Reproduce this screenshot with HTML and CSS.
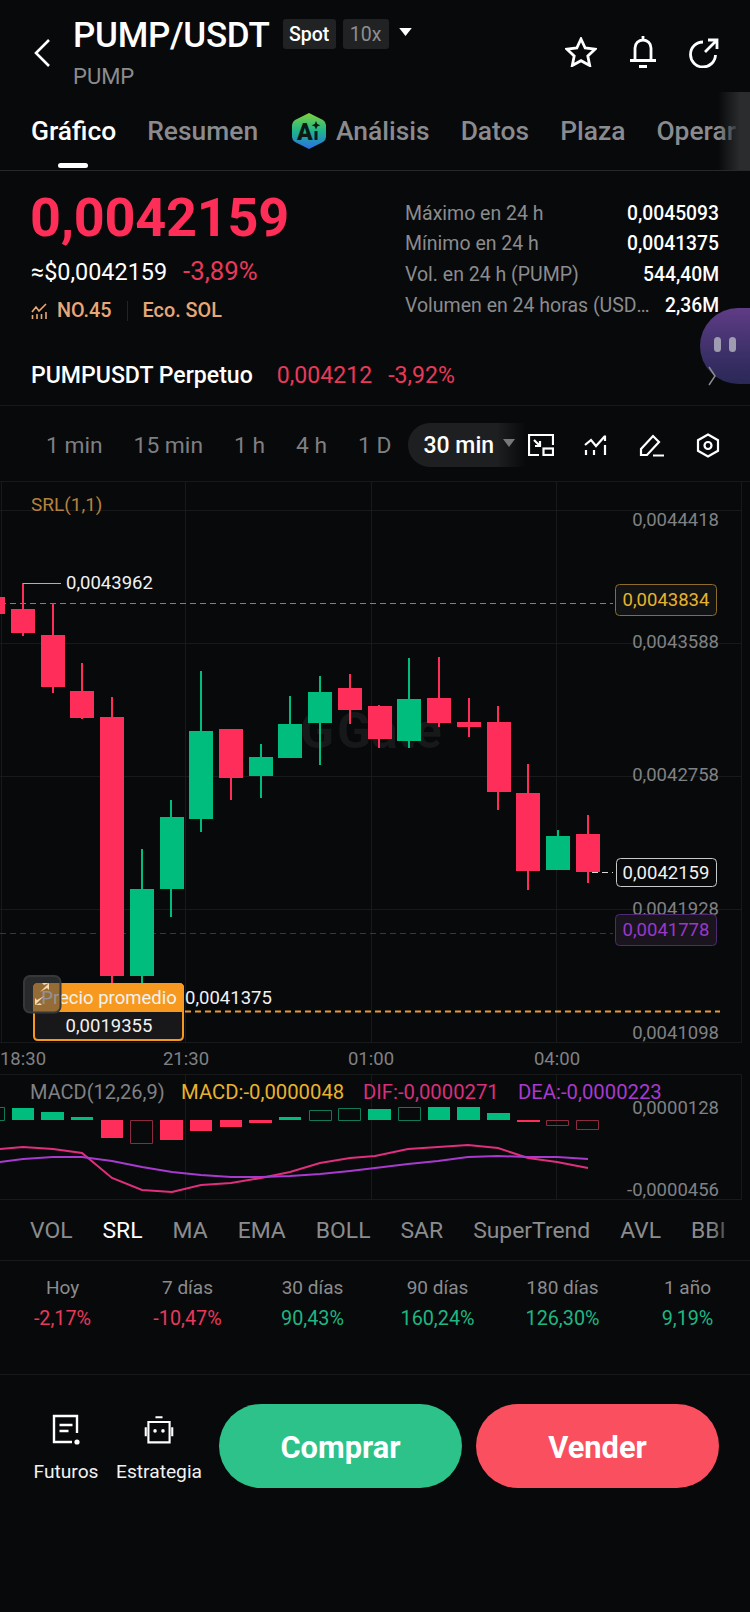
FILE: index.html
```html
<!DOCTYPE html>
<html lang="es">
<head>
<meta charset="utf-8">
<title>PUMP/USDT</title>
<link rel="stylesheet" href="styles.css">
</head>
<body>
<div class="page">
  <header class="header">
    <svg class="back" viewBox="0 0 18 30"><path d="M16 2 3 15l13 13"/></svg>
    <div class="title-block">
      <div class="title-line">
        <span class="title">PUMP/USDT</span>
        <span class="tag tag-on">Spot</span>
        <span class="tag">10x</span>
        <svg class="caret" viewBox="0 0 14 10"><path d="M0 0h14L7 9z"/></svg>
      </div>
      <div class="subtitle">PUMP</div>
    </div>
    <div class="head-icons">
      <svg class="hi star" viewBox="0 0 32 30"><path d="M16 2l4.2 9 9.8 1.2-7.2 6.7 1.9 9.6L16 23.700l-8.700 4.800 1.900-9.600L2 12.200 11.800 11z"/></svg>
      <svg class="hi bell" viewBox="0 0 28 33"><path d="M14 1v3M6 25V13a8 8 0 0 1 16 0v12M1 25.500h26M10 31.500h8"/></svg>
      <svg class="hi share" viewBox="0 0 30 30"><path d="M14 4A12.500 12.500 0 1 0 26.500 17M19 2h9v9M28 2 16 14"/></svg>
    </div>
  </header>

  <nav class="tabs">
    <span class="tab tab-on">Gráfico</span>
    <span class="tab">Resumen</span>
    <span class="tab tab-ai">
      <svg class="ai" viewBox="0 0 34 36">
        <defs><linearGradient id="aig" x1="0" y1="0" x2="0" y2="1"><stop offset="0" stop-color="#7ed23c"/><stop offset=".5" stop-color="#1fb58c"/><stop offset="1" stop-color="#2a6fe8"/></linearGradient></defs>
        <path fill="url(#aig)" d="M17 0 31 7q3 2 3 5v12q0 3-3 5L17 36 3 29q-3-2-3-5V12q0-3 3-5z"/>
        <text class="ai-a" x="5" y="27">A</text>
        <path fill="#0d1a14" d="M24 8l1.300 3 3 1.200-3 1.300L24 16.500l-1.300-3-3-1.300 3-1.200zM22.500 18h3v9h-3z"/>
      </svg>
      Análisis
    </span>
    <span class="tab">Datos</span>
    <span class="tab">Plaza</span>
    <span class="tab">Operar</span>
    <span class="tabs-fade"></span>
  </nav>

  <section class="summary">
    <div class="sum-left">
      <div class="price">0,0042159</div>
      <div class="sub-price"><span>≈$0,0042159</span><span class="down sub-pct">-3,89%</span></div>
      <div class="tags">
        <svg class="rank" viewBox="0 0 17 17"><path d="M1 9l4-5 3 4 7-7M1.500 12v4M6 11v5M10.500 11v5M15 9v7"/></svg>
        <span>NO.45</span><i class="sep"></i><span>Eco. SOL</span>
      </div>
    </div>
    <dl class="stats">
      <div class="stat"><dt>Máximo en 24 h</dt><dd>0,0045093</dd></div>
      <div class="stat"><dt>Mínimo en 24 h</dt><dd>0,0041375</dd></div>
      <div class="stat"><dt>Vol. en 24 h (PUMP)</dt><dd>544,40M</dd></div>
      <div class="stat"><dt class="clip">Volumen en 24 horas (USDT)</dt><dd>2,36M</dd></div>
    </dl>
  </section>

  <section class="perp">
    <span class="perp-name">PUMPUSDT Perpetuo</span>
    <span class="down perp-price">0,004212</span>
    <span class="down perp-pct">-3,92%</span>
    <svg class="perp-chev" viewBox="0 0 8 20"><path d="M1 1l6 9-6 9"/></svg>
  </section>

  <section class="frames">
    <span class="frame f1">1 min</span>
    <span class="frame f2">15 min</span>
    <span class="frame f3">1 h</span>
    <span class="frame f4">4 h</span>
    <span class="frame f5">1 D</span>
    <span class="frame-on">30 min<svg class="frame-caret" viewBox="0 0 12 8"><path d="M0 0h12L6 8z"/></svg></span>
    <span class="tools">
      <svg class="tool t-a" viewBox="0 0 26 22"><path d="M11 21H1V1h24v10M6 6l6 6M12 7v5H7"/><rect x="15.500" y="14.500" width="9.500" height="6.500"/></svg>
      <svg class="tool t-b" viewBox="0 0 24 22"><path d="M1 11l6-5 5 6 9-10M21 1.500V7M2 16v5M10 16v5M21 11v10"/></svg>
      <svg class="tool t-c" viewBox="0 0 26 23"><path d="M2 15 14 2l6 6L8 21H2zM14 21.500h11"/></svg>
      <svg class="tool t-d" viewBox="0 0 24 25"><path d="M12 1.500l10 5.700v10.600l-10 5.700-10-5.700V7.200z"/><circle cx="12" cy="12.500" r="3.500"/></svg>
    </span>
  </section>

  <svg class="chart" viewBox="0 482 750 718">
    <path class="grid" d="M0 510.500H742M0 643.500H742M0 776.500H742M0 909.500H742M0 1042.500H742M0 1074.500H742M0 1199.500H742M1.500 482V1042M185.500 482V1042M371.500 482V1042M556.500 482V1042M741.500 482V1042M185.500 1074V1200M371.500 1074V1200M556.500 1074V1200M741.500 1074V1200"/>

    <text class="wm" x="300" y="748">G</text>
    <text class="wm" x="337" y="748">Gate</text>

    <path class="dash-o" d="M0 603.500H613"/>
    <path class="dash-p" d="M0 933.500H613"/>
    <path class="dash-w" d="M592 872.500H613"/>
    <path class="dash-a" d="M185 1011.500H720"/>

    <path class="dn" d="M-19 597h24v17h-24zM11 609h24v24h-24zM22 583h2v53h-2zM41 635h24v52h-24zM52 603h2v90h-2zM70 691h24v27h-24zM81 663h2v56h-2zM100 717h24v259h-24zM111 697h2v288h-2zM219 729h24v49h-24zM230 729h2v71h-2zM338 688h24v22h-24zM349 674h2v50h-2zM368 706h24v33h-24zM378 705h2v43h-2zM427 698h24v25h-24zM438 657h2v70h-2zM457 722h24v5h-24zM468 698h2v39h-2zM487 722h24v70h-24zM497 706h2v104h-2zM516 793h24v78h-24zM527 764h2v126h-2zM576 834h24v38h-24zM587 815h2v68h-2z"/>
    <path class="up" d="M130 889h24v87h-24zM141 849h2v136h-2zM160 817h24v72h-24zM170 800h2v117h-2zM189 731h24v88h-24zM200 671h2v161h-2zM249 757h24v19h-24zM260 744h2v54h-2zM278 724h24v34h-24zM289 696h2v62h-2zM308 692h24v31h-24zM319 676h2v89h-2zM397 699h24v42h-24zM408 658h2v90h-2zM546 836h24v34h-24zM557 830h2v40h-2z"/>

    <path class="leader" d="M23 583.500H61"/>
    <text class="lbl-srl" x="31" y="511">SRL(1,1)</text>
    <text class="lbl-w" x="66" y="589">0,0043962</text>
    <text class="lbl-w" x="185" y="1004">0,0041375</text>

    <text class="axis end" x="719" y="526">0,0044418</text>
    <text class="axis end" x="719" y="648">0,0043588</text>
    <text class="axis end" x="719" y="781">0,0042758</text>
    <text class="axis end" x="719" y="915">0,0041928</text>
    <text class="axis end" x="719" y="1039">0,0041098</text>

    <rect class="box-y" x="615.500" y="584.500" width="101" height="31" rx="4"/>
    <text class="txt-y mid" x="666" y="606">0,0043834</text>
    <rect class="box-w" x="616.500" y="858.500" width="100" height="28" rx="4"/>
    <text class="lbl-w mid" x="666" y="879">0,0042159</text>
    <rect class="box-p" x="615.500" y="914.500" width="101" height="31" rx="4"/>
    <text class="txt-p mid" x="666" y="936">0,0041778</text>

    <path class="avg-body" d="M38 984h141q4 0 4 4v48q0 4-4 4H38q-4 0-4-4v-48q0-4 4-4z"/>
    <path class="avg-head" d="M38 983h141q5 0 5 5v24H33v-24q0-5 5-5z"/>
    <text class="lbl-w mid" x="109" y="1004">Precio promedio</text>
    <text class="lbl-w mid" x="109" y="1032">0,0019355</text>
    <rect class="expand" x="24" y="976" width="36.500" height="36.500" rx="6"/>
    <path class="expand-a" d="M40 992l9-9h-7l2 2 5-2v7l-2-2zM44 996l-9 9h7l-2-2-5 2v-7l2 2z"/>

    <text class="axis mid" x="23" y="1065">18:30</text>
    <text class="axis mid" x="186" y="1065">21:30</text>
    <text class="axis mid" x="371" y="1065">01:00</text>
    <text class="axis mid" x="557" y="1065">04:00</text>

    <text class="macd-t" x="30" y="1099">MACD(12,26,9)</text>
    <text class="txt-y macd-h" x="181" y="1099">MACD:-0,0000048</text>
    <text class="txt-d macd-h" x="363" y="1099">DIF:-0,0000271</text>
    <text class="txt-e macd-h" x="518" y="1099">DEA:-0,0000223</text>
    <text class="axis end" x="719" y="1114">0,0000128</text>
    <text class="axis end" x="719" y="1196">-0,0000456</text>

    <path class="up" d="M12 1108h22v12H12zM41 1112h23v8H41zM71 1117h22v3H71zM279 1117h22v3h-22zM368 1109h23v11h-23zM428 1107h22v13h-22zM457 1107h23v13h-23zM487 1113h23v7h-23z"/>
    <path class="dn" d="M101 1120h22v18h-22zM160 1120h23v20h-23zM190 1120h22v11h-22zM220 1120h22v7h-22zM249 1120h23v3h-23zM517 1120h23v2h-23z"/>
    <path class="hollow-u" d="M-18 1107.500H4.500V1120.500H-18zM309.500 1110.500h22v10h-22zM338.500 1108.500h22v12h-22zM398.500 1107.500h22v13h-22z"/>
    <path class="hollow-d" d="M130.500 1120.500h22v23h-22zM546.500 1120.500h22v5h-22zM576.500 1120.500h22v9h-22z"/>
    <polyline class="ln-d" points="0,1149 23,1147 53,1149 82,1153 112,1178 142,1190 172,1192 201,1185 231,1183 261,1178 290,1172 320,1163 350,1158 375,1156 408,1149 438,1147 468,1145 498,1148 528,1158 557,1162 588,1168"/>
    <polyline class="ln-e" points="0,1162 23,1159 53,1157 82,1157 112,1161 142,1167 172,1172 201,1175 231,1177 261,1177 290,1176 320,1174 350,1171 375,1168 408,1164 438,1161 468,1157 498,1156 528,1157 557,1157 588,1159"/>
  </svg>

  <nav class="inds">
    <span class="ind">VOL</span>
    <span class="ind ind-on">SRL</span>
    <span class="ind">MA</span>
    <span class="ind">EMA</span>
    <span class="ind">BOLL</span>
    <span class="ind">SAR</span>
    <span class="ind">SuperTrend</span>
    <span class="ind">AVL</span>
    <span class="ind">BBI</span>
    <span class="inds-fade"></span>
  </nav>

  <section class="returns">
    <div class="ret"><span class="ret-k">Hoy</span><span class="ret-d">-2,17%</span></div>
    <div class="ret"><span class="ret-k">7 días</span><span class="ret-d">-10,47%</span></div>
    <div class="ret"><span class="ret-k">30 días</span><span class="ret-u">90,43%</span></div>
    <div class="ret"><span class="ret-k">90 días</span><span class="ret-u">160,24%</span></div>
    <div class="ret"><span class="ret-k">180 días</span><span class="ret-u">126,30%</span></div>
    <div class="ret"><span class="ret-k">1 año</span><span class="ret-u">9,19%</span></div>
  </section>

  <footer class="actions">
    <div class="act act-f">
      <svg class="act-i" viewBox="0 0 30 32"><path d="M26 19V2H3v26h18M8.500 11h13M8.500 17h9"/><circle class="dot" cx="26" cy="28" r="2.600"/></svg>
      <span>Futuros</span>
    </div>
    <div class="act act-s">
      <svg class="act-i" viewBox="0 0 34 32"><path d="M13 1.500h8M5 7h24v23H5zM2 13v10M32 13v10"/><circle class="dot" cx="12.500" cy="17" r="2"/><circle class="dot" cx="21.500" cy="17" r="2"/></svg>
      <span>Estrategia</span>
    </div>
    <div class="btn btn-buy">Comprar</div>
    <div class="btn btn-sell">Vender</div>
  </footer>

  <div class="bubble"><i></i><i></i></div>
</div>
</body>
</html>
```
FILE: styles.css
```css
* { box-sizing: border-box; }
html, body { margin: 0; padding: 0; background: #08090a; }
body { font-family: Roboto, "Liberation Sans", sans-serif; color: #fff; }
.page { position: relative; width: 750px; height: 1612px; overflow: hidden; background: #08090a; }

.header { display: flex; height: 92px; padding: 16px 31px 0 33px; }
.back { width: 18px; height: 30px; margin-top: 22px; margin-right: 22px; fill: none; stroke: #fff; stroke-width: 2.6; }
.title-line { display: flex; align-items: center; height: 40px; }
.title { font-size: 35px; font-weight: 500; line-height: 40px; margin-right: 13px; letter-spacing: -.3px; }
.tag { display: flex; align-items: center; justify-content: center; height: 30px; border-radius: 3px; background: #212224; font-size: 19.500px; color: #8d8e90; margin-top: -4px; margin-right: 7px; }
.tag-on { color: #fff; font-weight: 500; width: 53px; }
.tag:not(.tag-on) { width: 46px; }
.caret { width: 13px; height: 9px; fill: #fff; margin-left: 3px; margin-top: -8px; }
.subtitle { font-size: 22px; line-height: 26px; margin-top: 8px; color: #8b8c8e; }
.head-icons { display: flex; margin-left: auto; align-items: flex-start; padding-top: 19px; }
.hi { fill: none; stroke: #fff; stroke-width: 2.8; }
.star { width: 32px; height: 30px; margin-top: 2px; }
.bell { width: 28px; height: 33px; margin-left: 32px; }
.share { width: 30px; height: 30px; margin-left: 32px; margin-top: 3px; }

.tabs { position: relative; display: flex; align-items: center; height: 79px; padding: 0 0 0 32px; gap: 31px; border-bottom: 1px solid #27282a; font-size: 26.400px; font-weight: 500; color: #8a8b8e; overflow: hidden; white-space: nowrap; }
.tab { position: relative; display: flex; align-items: center; line-height: 30px; margin-top: 0; }
.tab-on { color: #fff; margin-left: -1px; }
.tab-on::after { content: ""; position: absolute; left: 27px; top: 47px; width: 30px; height: 5px; border-radius: 3px; background: #fff; }
.tab-ai { margin-left: 3px; }
.ai { width: 34px; height: 36px; margin-right: 10px; }
.ai-a { font: 900 23px Roboto, sans-serif; fill: #0d1a14; }
.tabs-fade { position: absolute; right: 0; top: 0; bottom: 0; width: 32px; background: linear-gradient(90deg, rgba(40,41,43,0), #2b2c2e 70%); }

.summary { display: flex; justify-content: space-between; height: 169px; padding: 17px 31px 0 30px; }
.price { font-size: 54px; font-weight: 700; line-height: 60px; color: #ff2e58; letter-spacing: -.25px; }
.sub-price { display: flex; align-items: baseline; gap: 16px; font-size: 23.400px; line-height: 28px; margin-top: 9px; padding-left: 1px; }
.sub-pct { font-size: 25.800px; }
.down { color: #e8395a; }
.tags { display: flex; align-items: center; font-size: 19.800px; font-weight: 500; color: #e5a878; line-height: 24px; margin-top: 13px; padding-left: 1px; }
.rank { width: 17px; height: 17px; margin-right: 9px; fill: none; stroke: #e5a878; stroke-width: 1.600; }
.sep { width: 1px; height: 20px; background: #232426; margin: 0 15px; }
.stats { width: 314px; margin: 10px 0 0; }
.stat { display: flex; align-items: center; justify-content: space-between; height: 30.600px; font-size: 19.300px; }
.stat dt { color: #8b8c8e; white-space: nowrap; font-size: 19.500px; }
.stat dd { margin: 0; color: #fff; font-weight: 500; white-space: nowrap; }
.stat .clip { width: 247px; overflow: hidden; text-overflow: ellipsis; }

.perp { display: flex; align-items: center; height: 66px; padding: 6px 34px 0 31px; font-size: 23.100px; border-bottom: 1px solid #17181a; }
.perp-name { font-weight: 500; margin-right: 24px; }
.perp-price { margin-right: 16px; }
.perp-chev { position: relative; z-index: 2; width: 8px; height: 20px; margin-left: auto; fill: none; stroke: #8b8c8e; stroke-width: 1.500; }

.frames { display: flex; align-items: center; height: 76px; padding: 3px 30px 0 46px; font-size: 22.800px; color: #7e7f82; border-bottom: 1px solid #17181a; }
.frame { white-space: nowrap; }
.frame:not(:first-child) { margin-left: 31px; }
.frame-on { display: flex; align-items: center; height: 44px; width: 118px; margin-left: 16px; padding-left: 16px; border-radius: 22px 0 0 22px; color: #fff; font-weight: 500; font-size: 23px; background: linear-gradient(90deg, #1e1f21 75%, rgba(30,31,33,0)); white-space: nowrap; }
.frame-caret { width: 12px; height: 8px; margin-left: 9px; margin-top: -4px; fill: #77787b; }
.tools { display: flex; align-items: center; margin-left: auto; }
.tool { fill: none; stroke: #fff; stroke-width: 2.200; }
.t-a { width: 26px; height: 22px; }
.t-b { width: 24px; height: 22px; margin-left: 30px; }
.t-c { width: 26px; height: 23px; margin-left: 31px; }
.t-d { width: 24px; height: 25px; margin-left: 31px; }

.chart { display: block; width: 750px; height: 718px; font-family: Roboto, sans-serif; font-size: 18.500px; }
.grid { stroke: #17191a; stroke-width: 1; fill: none; }
.wm { font-size: 50px; font-weight: 700; fill: #16181a; }
.dash-o { stroke: #a77a32; stroke-width: 1; stroke-dasharray: 6 4; }
.dash-p { stroke: #4a2470; stroke-width: 1; stroke-dasharray: 6 4; }
.dash-w { stroke: #d8d8d8; stroke-width: 1; stroke-dasharray: 6 4; }
.dash-a { stroke: #e79a3c; stroke-width: 2; stroke-dasharray: 6 4; }
.dn { fill: #ff2d59; }
.up { fill: #00bd7e; }
.leader { stroke: #aeb0b2; stroke-width: 1; }
.lbl-srl { fill: #b4813f; font-size: 19px; }
.lbl-w { fill: #f2f2f2; }
.axis { fill: #808184; }
.end { text-anchor: end; }
.mid { text-anchor: middle; }
.box-y { fill: #121315; stroke: #8e6d2a; }
.txt-y { fill: #e8b32c; }
.box-w { fill: #08090a; stroke: #c9cacb; }
.box-p { fill: #1a141f; stroke: #4e2a70; }
.txt-p { fill: #9a38c8; }
.avg-body { fill: #18181b; stroke: #f5981f; stroke-width: 2; }
.avg-head { fill: #f7991f; }
.expand { fill: rgba(70,70,72,.55); stroke: #37383a; stroke-width: 2; }
.expand-a { fill: #f6d9ae; }
.macd-t { fill: #808184; font-size: 20px; }
.macd-h { font-size: 20.300px; }
.txt-d { fill: #d8307c; }
.txt-e { fill: #a83ad0; }
.hollow-u { fill: none; stroke: #13775a; }
.hollow-d { fill: none; stroke: #8e2a40; }
.ln-d { fill: none; stroke: #e02f7e; stroke-width: 2; }
.ln-e { fill: none; stroke: #a83ad0; stroke-width: 2; }

.inds { position: relative; display: flex; align-items: center; height: 61px; padding: 0 0 0 30px; font-size: 22.900px; color: #8b8c8e; white-space: nowrap; overflow: hidden; border-bottom: 1px solid #17181a; }
.ind { margin-right: 30px; }
.ind-on { color: #fff; }
.inds-fade { position: absolute; right: 0; top: 0; bottom: 0; width: 40px; background: linear-gradient(90deg, rgba(8,9,10,0), #08090a 80%); }

.returns { display: grid; grid-template-columns: repeat(6, 1fr); height: 114px; padding-top: 11px; border-bottom: 1px solid #17181a; align-content: start; }
.ret { display: flex; flex-direction: column; align-items: center; font-size: 19px; line-height: 31px; }
.ret-k { color: #8b8c8e; }
.ret-d { color: #e8395a; font-size: 19.800px; }
.ret-u { color: #1fb682; font-size: 19.800px; }

.actions { display: flex; align-items: flex-start; height: 236px; padding-top: 29px; }
.act { display: flex; flex-direction: column; align-items: center; font-size: 19.200px; line-height: 24px; color: #f2f2f2; padding-top: 10px; }
.act-i { width: 30px; height: 32px; margin-bottom: 14px; fill: none; stroke: #fff; stroke-width: 2.400; }
.act-i .dot { fill: #fff; stroke: none; }
.act-f { width: 72px; margin-left: 30px; }
.act-s { width: 90px; margin-left: 12px; margin-right: 15px; }
.btn { display: flex; align-items: center; justify-content: center; height: 84px; width: 243px; border-radius: 42px; padding-top: 3px; font-size: 30.800px; font-weight: 700; color: #fff; }
.btn-buy { background: #2cc28a; margin-right: 14px; }
.btn-sell { background: #f94f5f; }

.bubble { position: absolute; right: 0; top: 308px; width: 50px; height: 76px; border-radius: 38px 0 0 38px; background: linear-gradient(180deg, #5f3c86, #3c3068 60%, #2a2856); display: flex; align-items: center; padding-left: 14px; gap: 8px; }
.bubble i { display: block; width: 7px; height: 15px; margin-top: -3px; border-radius: 4px; background: #9f9bb0; }
```
